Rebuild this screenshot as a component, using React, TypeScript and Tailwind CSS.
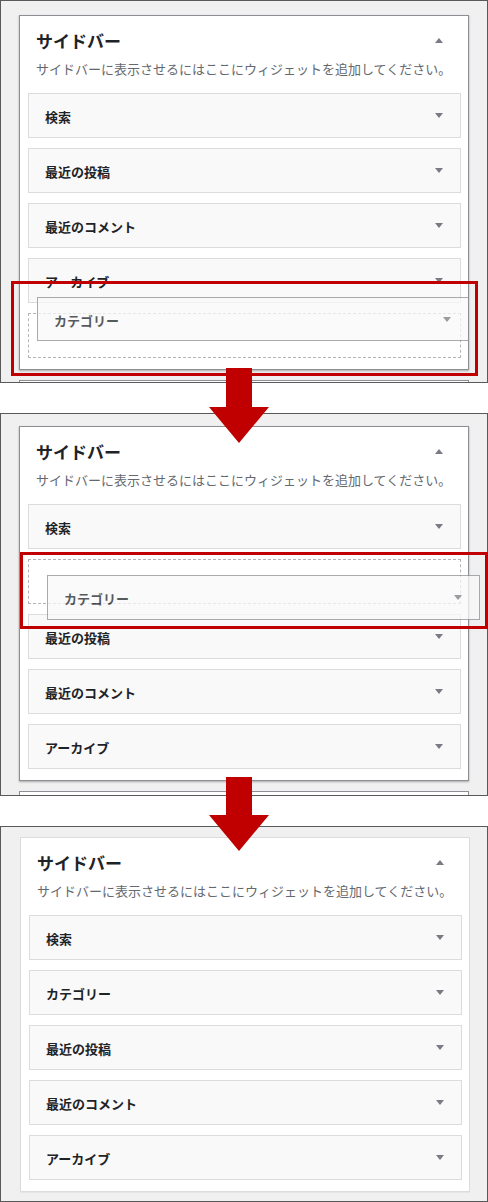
import clsx from 'clsx'

type Slot = { label?: string; placeholder?: boolean }

function Caret({ up }: { up?: boolean }) {
  return (
    <svg width="8" height="5" viewBox="0 0 8 5" className="shrink-0">
      <polygon points={up ? '0,5 8,5 4,0' : '0,0 8,0 4,5'} fill="#787c82" />
    </svg>
  )
}

function Widget({ label, className }: { label: string; className?: string }) {
  return (
    <div
      className={clsx(
        'flex h-[45px] items-center justify-between border pl-[16px] pr-[17px]',
        className ?? 'border-[#dcdcde] bg-[#f9f9f9]'
      )}
    >
      <span className="pt-[2px] text-[13px] font-semibold leading-none text-[#1d2327]">{label}</span>
      <Caret />
    </div>
  )
}

function Panel({
  slots,
  done,
  className,
}: {
  slots: Slot[]
  done?: boolean
  className?: string
}) {
  return (
    <div className={clsx('overflow-hidden border border-[#595959] bg-[#f0f0f0]', className)}>
      <div
        className={clsx(
          'border bg-white',
          done
            ? 'border-[#dcdcde] shadow-[0_1px_1px_rgba(0,0,0,0.04)]'
            : 'border-[#8c8f94] shadow-[0_1px_2px_rgba(0,0,0,0.3)]'
        )}
      >
        <div className="mt-[12px] flex h-[25px] items-center justify-between pl-[16px] pr-[25px]">
          <span className="text-[17px] font-bold text-[#1d2327]">サイドバー</span>
          <Caret up />
        </div>
        <div className="mt-[6px] pl-[16px] text-[13px] leading-[20px] text-[#646970]">
          サイドバーに表示させるにはここにウィジェットを追加してください。
        </div>
        <div className="mt-[14px] flex flex-col gap-[10px] pb-[11px] pl-[8px] pr-[7px]">
          {slots.map((slot, i) =>
            slot.placeholder ? (
              <div key={i} className="h-[45px] border border-dashed border-[#b4b4b4]" />
            ) : (
              <Widget key={i} label={slot.label!} />
            )
          )}
        </div>
      </div>
      {!done && <div className="mt-[10px] h-[40px] border border-[#8c8f94] bg-white" />}
    </div>
  )
}

function Arrow({ className, height }: { className: string; height: number }) {
  const neck = height - 36
  return (
    <svg width="60" height={height} viewBox={`0 0 60 ${height}`} className={clsx('absolute', className)}>
      <polygon
        points={`17,0 43,0 43,${neck} 60,${neck} 30,${height} 0,${neck} 17,${neck}`}
        fill="#c00000"
      />
    </svg>
  )
}

function Dragged({ className }: { className: string }) {
  return (
    <div className={clsx('absolute opacity-75', className)}>
      <Widget label="カテゴリー" className="h-full border-[#8c8f94] bg-[#f9f9f9]" />
    </div>
  )
}

export default function App() {
  return (
    <div className="relative h-[1202px] w-[488px] bg-white font-['Noto_Sans_CJK_JP',sans-serif]">
      <div className="flex flex-col gap-[30px]">
        <Panel
          className="h-[383px] pl-[18px] pr-[18px] pt-[14px]"
          slots={[
            { label: '検索' },
            { label: '最近の投稿' },
            { label: '最近のコメント' },
            { label: 'アーカイブ' },
            { placeholder: true },
          ]}
        />
        <Panel
          className="h-[383px] pl-[18px] pr-[18px] pt-[12px]"
          slots={[
            { label: '検索' },
            { placeholder: true },
            { label: '最近の投稿' },
            { label: '最近のコメント' },
            { label: 'アーカイブ' },
          ]}
        />
        <Panel
          done
          className="h-[376px] pl-[19px] pr-[17px] pt-[10px]"
          slots={[
            { label: '検索' },
            { label: 'カテゴリー' },
            { label: '最近の投稿' },
            { label: '最近のコメント' },
            { label: 'アーカイブ' },
          ]}
        />
      </div>

      <Dragged className="left-[37px] top-[297px] h-[44px] w-[432px]" />
      <div className="absolute left-[11px] top-[281px] h-[95px] w-[467px] border-[3px] border-[#c00000]" />

      <Dragged className="left-[47px] top-[575px] h-[45px] w-[433px]" />
      <div className="absolute left-[20px] top-[552px] h-[77px] w-[468px] border-[3px] border-[#c00000]" />

      <Arrow className="left-[209px] top-[368px]" height={75} />
      <Arrow className="left-[209px] top-[777px]" height={74} />
    </div>
  )
}
